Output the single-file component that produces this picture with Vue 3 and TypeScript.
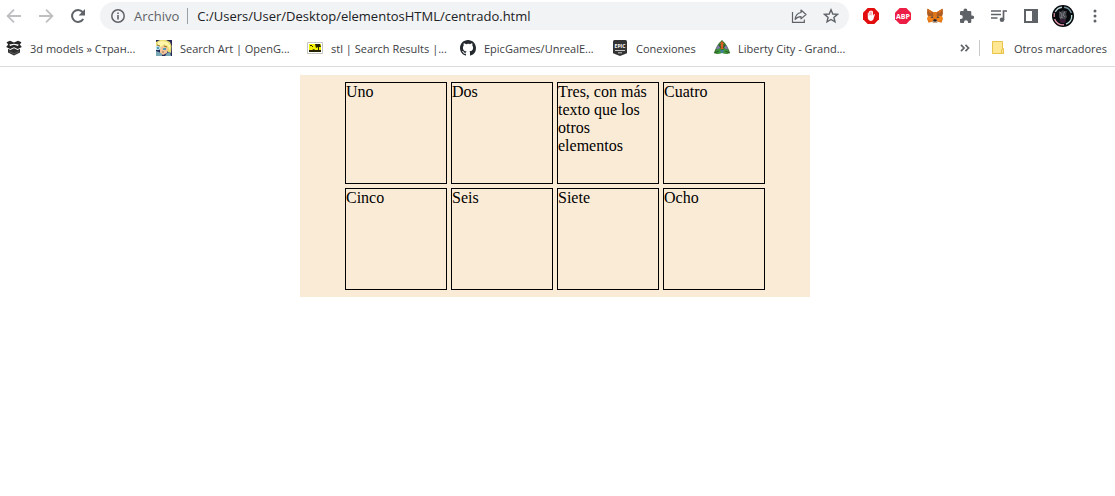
<script setup lang="ts">
import { ref } from 'vue'

interface Bookmark {
  icon: string
  label: string
  width: number
}

const address = ref('C:/Users/User/Desktop/elementosHTML/centrado.html')

const bookmarks: Bookmark[] = [
  { icon: 'box', label: '3d models » Стран...', width: 110 },
  { icon: 'portrait', label: 'Search Art | OpenG...', width: 111 },
  { icon: 'stl', label: 'stl | Search Results |...', width: 113 },
  { icon: 'github', label: 'EpicGames/UnrealE...', width: 112 },
  { icon: 'epic', label: 'Conexiones', width: 62 },
  { icon: 'city', label: 'Liberty City - Grand...', width: 113 },
]

const items: string[] = [
  'Uno',
  'Dos',
  'Tres, con más texto que los otros elementos',
  'Cuatro',
  'Cinco',
  'Seis',
  'Siete',
  'Ocho',
]
</script>

<template>
  <div class="browser">
    <header class="chrome">
      <div class="toolbar">
        <nav class="history" aria-label="Historial">
          <button class="tool dim" type="button" aria-label="Atrás">
            <svg width="16" height="16" viewBox="0 0 16 16"><path d="M15 8H2M8 1.6 1.6 8 8 14.4" fill="none" stroke="currentColor" stroke-width="1.8" /></svg>
          </button>
          <button class="tool dim" type="button" aria-label="Adelante">
            <svg width="16" height="16" viewBox="0 0 16 16"><path d="M1 8h13M8 1.6 14.4 8 8 14.4" fill="none" stroke="currentColor" stroke-width="1.8" /></svg>
          </button>
          <button class="tool" type="button" aria-label="Recargar">
            <svg width="16" height="16" viewBox="0 0 16 16">
              <path d="M13.2 11A6 6 0 1 1 12.6 4" fill="none" stroke="currentColor" stroke-width="2" />
              <path d="M15 1v6.4H8.6z" fill="currentColor" />
            </svg>
          </button>
        </nav>

        <form class="omnibox" @submit.prevent>
          <button class="site" type="button">
            <svg width="16" height="16" viewBox="0 0 16 16">
              <circle cx="8" cy="8" r="6.2" fill="none" stroke="currentColor" stroke-width="1.5" />
              <path d="M7.2 7h1.6v4.4H7.2zM7.2 4.4h1.6V6H7.2z" fill="currentColor" />
            </svg>
            <span>Archivo</span>
          </button>
          <input v-model="address" class="address" type="text" aria-label="Dirección" spellcheck="false" />
          <button class="tool" type="button" aria-label="Compartir">
            <svg width="16" height="16" viewBox="0 0 16 16" fill="none" stroke="currentColor" stroke-width="1.2">
              <path d="M1.5 4v10.4h11.8V11.5" />
              <path d="M10 2l5 4.5-5 4.4V8.6C7.4 8.6 5.6 9.5 4.2 11.4 4.500 7.6 6.500 5 10 4.500z" stroke-linejoin="round" />
            </svg>
          </button>
          <button class="tool" type="button" aria-label="Añadir a marcadores">
            <svg width="16" height="16" viewBox="0 0 16 16"><path d="M8 1.8 9.800 6l4.600.4-3.500 3 1.100 4.500L8 11.500l-4 2.400 1.100-4.500-3.500-3L6.200 6z" fill="none" stroke="currentColor" stroke-width="1.4" /></svg>
          </button>
        </form>

        <div class="extensions">
          <button class="tool" type="button" aria-label="AdBlock">
            <svg width="16" height="16" viewBox="0 0 16 16">
              <path d="M4.700 0h6.600L16 4.700v6.600L11.300 16H4.700L0 11.300V4.700z" fill="#e40d0d" />
              <path d="M4.800 8V4.800q.6-.8 1.200 0V3.500q.7-.8 1.300 0V2.800q.7-.8 1.400 0v.7q.7-.8 1.300 0v4.300l.9-1.500q.8-.5 1 .3l-1.600 4.900Q9.500 13 7.800 12.900 4.800 12.500 4.800 9.500z" fill="#fff" />
              <path d="M6.100 4.600v2.800M7.400 4v3.400M8.700 4v3.400" stroke="#e40d0d" stroke-width=".35" />
            </svg>
          </button>
          <button class="tool" type="button" aria-label="Adblock Plus">
            <svg width="16" height="16" viewBox="0 0 16 16">
              <path d="M4.700 0h6.600L16 4.700v6.600L11.300 16H4.700L0 11.300V4.700z" fill="#ed1e45" />
              <text class="abp" x="8" y="10.500" text-anchor="middle">ABP</text>
            </svg>
          </button>
          <button class="tool" type="button" aria-label="MetaMask">
            <svg width="16" height="16" viewBox="0 0 16 16">
              <path d="M.5.8 5.800 4h4.400L15.500.8l.3 4.400-.8 3 .8 2.800-1.300 3.800-3.400-1L9.300 15H6.700l-1.800-1.200-3.400 1L.2 11 1 8.200.2 5.200z" fill="#e2761b" />
              <path d="M.5.8 5.800 4 6.500 8 1 8.200.2 5.200zM15.500.8 10.200 4 9.500 8l5.500.2.800-3z" fill="#a95c24" />
              <path d="M.5.8 5.800 4l-3 1.500zM15.500.8 10.200 4l3 1.500z" fill="#d96b18" />
              <path d="M1 8.200 4.800 8l1.400 2-1.300 3.800-4.700-2.800zM15 8.200 11.200 8l-1.400 2 1.300 3.800 4.700-2.800z" fill="#f6851b" />
              <path d="m3.300 9.200 2.100-1 .8 2zM12.700 9.200l-2.100-1-.8 2z" fill="#233447" />
              <path d="m4.900 13.800 1.500-1.500h3.200l1.500 1.500L9.300 15H6.700z" fill="#c0ad9e" />
              <path d="m6.400 12.300.4-1h2.400l.4 1-.4 1.100H6.800z" fill="#202124" />
            </svg>
          </button>
          <button class="tool" type="button" aria-label="Extensiones">
            <svg width="16" height="16" viewBox="0 0 16 16"><path d="M13.300 7.400h-1V4.300c0-.8-.6-1.300-1.300-1.300H8.300V2.300a1.900 1.900 0 0 0-3.800 0V3H2.300C1.500 3 1 3.600 1 4.300V7h.8a2 2 0 0 1 0 4H1v2.700c0 .7.500 1.300 1.300 1.300H5v-.8a2 2 0 0 1 4 0v.8h2c.7 0 1.300-.6 1.300-1.300v-2.600h1a1.850 1.850 0 0 0 0-3.700z" fill="currentColor" /></svg>
          </button>
          <button class="tool" type="button" aria-label="Control multimedia">
            <svg width="16" height="16" viewBox="0 0 16 16">
              <path d="M0 3h10M0 6.500h10M0 10h6.500M12.500 12V3H16" fill="none" stroke="currentColor" stroke-width="1.7" />
              <circle cx="11" cy="11.800" r="2.300" fill="currentColor" />
            </svg>
          </button>
          <button class="tool" type="button" aria-label="Panel lateral">
            <svg width="16" height="16" viewBox="0 0 16 16"><path d="M1 1h14v14H1zM3 3v10h6V3z" fill="currentColor" fill-rule="evenodd" /></svg>
          </button>
          <button class="tool" type="button" aria-label="Perfil">
            <svg width="22" height="22" viewBox="0 0 22 22">
              <circle cx="11" cy="11" r="11" fill="#08090c" />
              <g fill="none" stroke-width="1.4">
                <path d="M3.200 7A8.800 8.800 0 0 1 10 2.200" stroke="#b5cfd3" />
                <path d="M12 2.300A8.800 8.800 0 0 1 19.300 8" stroke="#73939c" />
                <path d="M19.700 10A8.800 8.800 0 0 1 14 19.200" stroke="#b5dedb" />
                <path d="M12 19.800A8.800 8.800 0 0 1 2.600 14" stroke="#e297aa" />
                <path d="M2.300 12V8" stroke="#b47b83" />
              </g>
              <path d="m7 6 2 1 2-2 1 2 3-1-1 3 1 3-2 3-2-1-2 2-2-4z" fill="#45464b" />
              <path d="m8 7 2 3-1 2m4-6-2 4 2 2m-5 1 3-1" fill="none" stroke="#888a91" stroke-width=".8" />
              <path d="m7 15 3-1 4 1-1 3H9z" fill="#3b1c38" />
            </svg>
          </button>
          <button class="tool" type="button" aria-label="Menú">
            <svg width="16" height="16" viewBox="0 0 16 16" fill="currentColor"><circle cx="8" cy="3" r="1.500" /><circle cx="8" cy="8" r="1.500" /><circle cx="8" cy="13" r="1.500" /></svg>
          </button>
        </div>
      </div>

      <nav class="bookmarks" aria-label="Marcadores">
        <a v-for="mark in bookmarks" :key="mark.label" class="bookmark" href="#">
          <svg v-if="mark.icon === 'box'" width="16" height="16" viewBox="0 0 16 16">
            <path d="M4 .8 8 2.600l4-1.800 3.500 1.500-1.700 2.200L15.800 7l-4 2L8 7.300 4.200 9l-4-2 2-2.500L.5 2.300zM3.300 4.500 4 6l4-1.300L12 6l.7-1.500L8 3.800z" fill="#242424" fill-rule="evenodd" />
            <path d="m2 8.800 2.300 1.100L8 8.300l3.700 1.600L14 8.800v3.700l-6 3-6-3z" fill="#303030" />
            <path d="m3 11.500 5 2.300 5-2.300" fill="none" stroke="#777" stroke-width=".6" />
          </svg>
          <svg v-else-if="mark.icon === 'portrait'" width="16" height="16" viewBox="0 0 16 16">
            <path d="M0 0h16v16H0z" fill="#252858" />
            <path d="M0 2 4 0h6l4 2 1.500 4-.5 7-3-1-2-3-5 1-5-2z" fill="#e8dc73" />
            <path d="m2 2 4-1 5 1 3 3v5l-2-4-4-2-3 3-3-2z" fill="#fff6ac" />
            <path d="m4 8 3-2 3 1 2 2-1 4-4 2-3-2z" fill="#f3c49d" />
            <path d="M0 6h3l2 2-2 2H0z" fill="#b9e3ea" />
            <path d="M1 7h2v2H1zm6 1h3v2H7z" fill="#4e9db4" />
            <path d="m0 11 3 1 3 2v2H0zM11 13l3-1 1 4H9z" fill="#79a9b5" />
            <path d="m1 5 3 1M8 6l3 1M6 12h2" fill="none" stroke="#94703f" />
          </svg>
          <svg v-else-if="mark.icon === 'stl'" width="16" height="16" viewBox="0 0 16 16">
            <path d="M.5 2.500h15v11H.5z" fill="#fff" stroke="#c4c4c4" />
            <path d="M2 4h12v8H2z" fill="#f3ef05" />
            <path d="M2 10h3l2-1 1 1h6v2H2zM3 5h2v1H3zm5-1h5l1 3h-2v3h-1V7L9 8zM5 6h1v1H5z" fill="#252400" />
          </svg>
          <svg v-else-if="mark.icon === 'github'" width="16" height="16" viewBox="0 0 16 16"><path d="M8 0C3.580 0 0 3.580 0 8c0 3.540 2.290 6.530 5.470 7.590.4.070.55-.17.55-.38 0-.19-.01-.82-.01-1.490-2.010.37-2.530-.49-2.690-.94-.09-.23-.48-.94-.82-1.130-.28-.15-.68-.52-.01-.53.63-.01 1.080.58 1.230.82.72 1.210 1.870.87 2.330.66.07-.52.28-.87.510-1.070-1.780-.2-3.640-.89-3.640-3.950 0-.87.310-1.590.82-2.150-.08-.2-.36-1.020.08-2.120 0 0 .67-.21 2.200.82A7.600 7.600 0 0 1 8 3.860c.68 0 1.360.09 2 .27 1.530-1.040 2.200-.82 2.200-.82.44 1.100.16 1.920.08 2.120.51.56.82 1.270.82 2.150 0 3.070-1.870 3.750-3.650 3.950.29.25.54.73.54 1.480 0 1.070-.01 1.930-.01 2.200 0 .21.15.46.55.38A8.010 8.010 0 0 0 16 8c0-4.420-3.580-8-8-8z" fill="#24292f" /></svg>
          <svg v-else-if="mark.icon === 'epic'" width="16" height="16" viewBox="0 0 16 16">
            <path d="M2.500 0h11Q15 0 15 1.500v11.800L8 16l-7-2.700V1.500Q1 0 2.500 0z" fill="#343434" />
            <text class="epic" x="8" y="8" text-anchor="middle">EPIC</text>
            <path d="M3 10.500h10M6 12.800h4" fill="none" stroke="#c8c8c8" />
          </svg>
          <svg v-else width="16" height="16" viewBox="0 0 16 16">
            <path d="m8 0 3 3 2 3 2 4 1 3-3 1-5-1-5 1-3-1 1-3 2-4 2-3z" fill="#39782f" />
            <path d="M4 5 2 9l3 1 1-3zM12 5l-2 3 2 2 2-1z" fill="#8475ae" />
            <path d="m8 1 2 3H9l.5 5h-3L7 4H6z" fill="#e05a24" />
            <path d="m2 10 4-2 2 5-5 1zM14 10l-4-2-2 5 5 1z" fill="#3c963b" />
            <path d="M6 10h4l-1 3H7z" fill="#427d95" />
            <path d="m0 13 5-2M16 13l-5-2M5 5l2 3M11 5 9 8" fill="none" stroke="#244f20" stroke-width=".7" />
          </svg>
          <span class="label" :style="{ width: mark.width + 'px' }">{{ mark.label }}</span>
        </a>
        <button class="overflow" type="button" aria-label="Más marcadores">
          <svg width="10" height="8" viewBox="0 0 10 8"><path d="m1 .8 3 3.200-3 3.200M5.500.8l3 3.200-3 3.200" fill="none" stroke="#5f6368" stroke-width="1.700" /></svg>
        </button>
        <button class="folder" type="button">
          <svg width="12" height="16" viewBox="0 0 12 16">
            <path d="M.5 1.500h10v7h1v5H.5z" fill="#ffe793" stroke="#e9c34c" />
            <path d="M9.500 13.500v-3.500l1-1.500 1 1.500v3.500z" fill="#ffe793" stroke="#e9c34c" />
          </svg>
          <span>Otros marcadores</span>
        </button>
      </nav>
    </header>

    <main class="page">
      <div class="container">
        <div v-for="item in items" :key="item" class="cell">{{ item }}</div>
      </div>
    </main>
  </div>
</template>

<style>
body {
  margin: 0;
  background: #fff;
}
</style>

<style scoped>
.browser {
  min-height: 100vh;
  background: #fff;
}

.chrome {
  border-bottom: 1px solid #dadcde;
  color: #5f6368;
  font-family: "Open Sans", "Noto Sans", sans-serif;
  font-size: 11px;
}

button {
  padding: 0;
  border: 0;
  background: none;
  color: inherit;
  font: inherit;
}

svg {
  display: block;
  flex: none;
}

.toolbar {
  display: flex;
  gap: 8px;
  padding: 2px 6px 0 0;
}

.history,
.extensions {
  display: flex;
  gap: 4px;
}

.tool {
  display: grid;
  flex: none;
  place-items: center;
  width: 28px;
  height: 28px;
}

.dim {
  color: #bdbfc1;
}

.omnibox {
  display: flex;
  flex: 1;
  gap: 4px;
  align-items: center;
  min-width: 0;
  padding-right: 4px;
  padding-left: 10px;
  border-radius: 14px;
  background: #f1f3f4;
  font-size: 13px;
}

.site {
  display: flex;
  gap: 8px;
  align-items: center;
  height: 16px;
  padding-right: 8px;
  border-right: 1px solid #9aa0a6;
}

.address {
  flex: 1;
  min-width: 0;
  padding: 0 0 0 5px;
  border: 0;
  outline: 0;
  background: none;
  color: #202124;
  font: inherit;
}

.bookmarks {
  display: flex;
  gap: 16px;
  align-items: center;
  height: 36px;
  padding: 0 8px 0 6px;
}

.bookmark {
  display: flex;
  gap: 8px;
  align-items: center;
  color: #3c4043;
  text-decoration: none;
}

.label {
  white-space: nowrap;
}

.overflow {
  margin-left: auto;
}

.folder {
  display: flex;
  gap: 10px;
  align-items: center;
  height: 16px;
  margin-left: -7px;
  padding-left: 12px;
  border-left: 1px solid #c8cacc;
  color: #3c4043;
  white-space: nowrap;
}

.abp {
  fill: #fff;
  font: bold 7px "Open Sans", sans-serif;
}

.epic {
  fill: #fff;
  font: bold 5px "Open Sans", sans-serif;
}

.page {
  padding: 8px 13px 8px 8px;
}

.container {
  display: grid;
  grid-template-columns: repeat(4, 102px);
  gap: 4px;
  justify-content: center;
  box-sizing: border-box;
  max-width: 510px;
  margin: 0 auto;
  padding: 7px 0;
  background: #faebd7;
}

.cell {
  box-sizing: border-box;
  min-height: 102px;
  border: 1px solid #000;
  color: #000;
  font: 16px/18px "Liberation Serif", "Times New Roman", serif;
}
</style>
